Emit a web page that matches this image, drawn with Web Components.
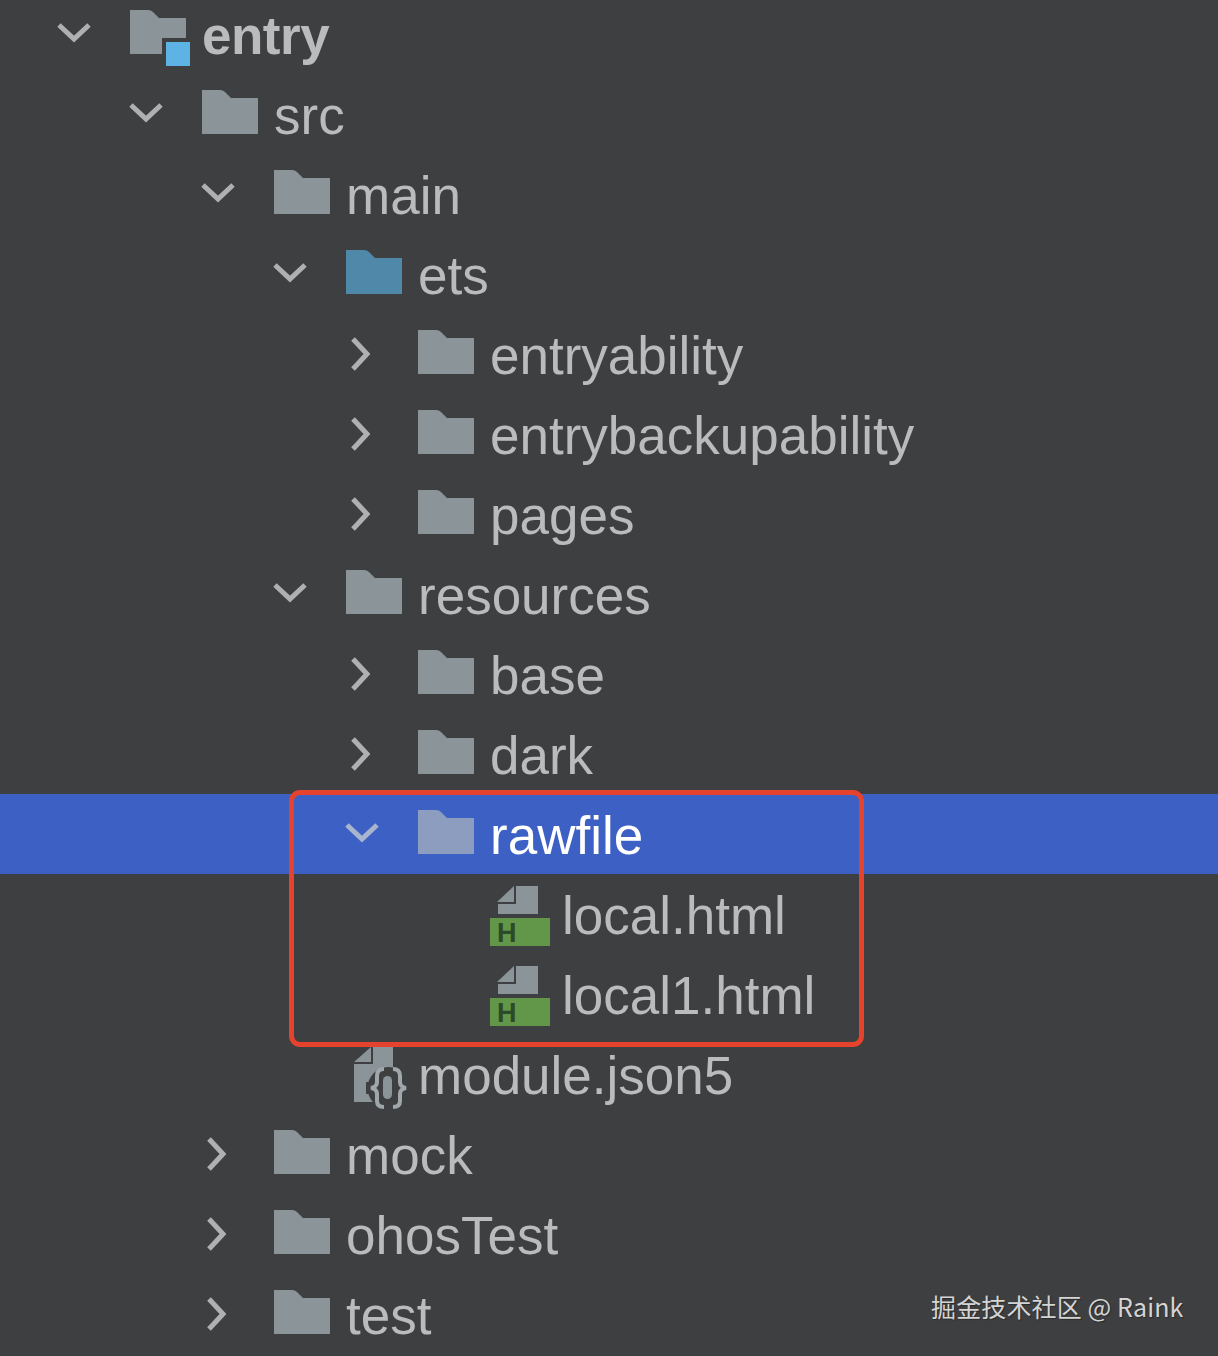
<!DOCTYPE html>
<html>
<head>
<meta charset="utf-8">
<title>Project tree</title>
<style>
    html, body { margin: 0; padding: 0; background: #3e3f41; }
    body { overflow: hidden; height: 1356px; }
</style>
</head>
<body>
<project-tree>
    <tree-row level="0" arrow="down" icon="module" bold>entry</tree-row>
    <tree-row level="1" arrow="down" icon="folder">src</tree-row>
    <tree-row level="2" arrow="down" icon="folder">main</tree-row>
    <tree-row level="3" arrow="down" icon="source">ets</tree-row>
    <tree-row level="4" arrow="right" icon="folder">entryability</tree-row>
    <tree-row level="4" arrow="right" icon="folder">entrybackupability</tree-row>
    <tree-row level="4" arrow="right" icon="folder">pages</tree-row>
    <tree-row level="3" arrow="down" icon="folder">resources</tree-row>
    <tree-row level="4" arrow="right" icon="folder">base</tree-row>
    <tree-row level="4" arrow="right" icon="folder">dark</tree-row>
    <tree-row level="4" arrow="down" icon="folder" selected>rawfile</tree-row>
    <tree-row level="5" icon="html">local.html</tree-row>
    <tree-row level="5" icon="html">local1.html</tree-row>
    <tree-row level="3" icon="json">module.json5</tree-row>
    <tree-row level="2" arrow="right" icon="folder">mock</tree-row>
    <tree-row level="2" arrow="right" icon="folder">ohosTest</tree-row>
    <tree-row level="2" arrow="right" icon="folder">test</tree-row>
    <highlight-box></highlight-box>
    <water-mark>掘金技术社区 @ Raink</water-mark>
</project-tree>

<script>
const folderPath = 'M0 0H18Q21 0 23 2L29 8H56V44H0Z';

const arrows = {
    down: '<path d="M2 8L17 22L32 8" fill="none" stroke="currentColor" stroke-width="5"/>',
    right: '<path d="M8 2L22 17L8 32" fill="none" stroke="currentColor" stroke-width="5"/>'
};

const icons = {
    folder: `<svg width="56" height="44" viewBox="0 0 56 44"><path class="fold" d="${folderPath}"/></svg>`,
    source: `<svg width="56" height="44" viewBox="0 0 56 44"><path d="${folderPath}" fill="#4f88a8"/></svg>`,
    module: `<svg width="60" height="56" viewBox="0 0 60 56" style="overflow:visible">
        <path class="fold" d="M0 0H18Q21 0 23 2L29 8H56V28H32V44H0Z"/>
        <rect x="36" y="32" width="24" height="24" fill="#5db3e4"/></svg>`,
    html: `<svg class="up" width="60" height="60" viewBox="0 0 60 60" style="overflow:visible">
        <path d="M7 16L24 0V16Z" fill="#8b9499"/>
        <path d="M26 0H48V28H8V18H26Z" fill="#8b9499"/>
        <rect x="0" y="32" width="60" height="28" fill="#629749"/>
        <text x="7" y="56" font-family="'Liberation Sans'" font-weight="700" font-size="27" fill="#2c4a2a">H</text></svg>`,
    json: `<svg class="up" width="62" height="64" viewBox="0 0 62 64" style="overflow:visible">
        <path d="M8 16L25 1V16Z" fill="#8b9499"/>
        <path d="M27 0H47V56H8V18H27Z" fill="#8b9499"/>
        <circle cx="42.5" cy="42" r="21" fill="#3e3f41"/>
        <rect x="20" y="36" width="8" height="12" fill="#3e3f41"/>
        <path d="M38 23Q31 23 31 30V36Q31 41 25 42Q31 43 31 48V55Q31 61 38 61M47 23Q54 23 54 30V36Q54 41 60 42Q54 43 54 48V55Q54 61 47 61" fill="none" stroke="#a0a7ab" stroke-width="4"/>
        <rect x="37" y="30" width="9" height="23" rx="4.5" fill="#8b9499"/></svg>`
};

const rowTemplate = document.createElement('template');
rowTemplate.innerHTML = `
<style>
    :host {
        display: flex;
        align-items: center;
        height: 80px;
        color: #b9bbbd;
        font-family: "Liberation Sans", Arial, sans-serif;
        font-size: 53px;
        white-space: nowrap;
    }
    :host([selected]) { background: #3d60c4; color: #fff; }
    :host([bold]) { font-weight: 700; letter-spacing: -.5px; }
    .arrow {
        width: 73px;
        height: 34px;
        flex: none;
        color: #aeb0b2;
    }
    .arrow svg { display: block; }
    .icon {
        display: flex;
        align-self: flex-start;
        width: 56px;
        flex: none;
        margin-top: 16px;
        margin-right: 16px;
    }
    .icon svg { display: block; flex: none; }
    .icon svg.up { margin-top: -4px; }
    .fold { fill: #8b9499; }
    :host([selected]) .fold { fill: #8c9dc0; }
    :host([selected]) .arrow { color: #a9b4cf; }
    .label { position: relative; top: 1px; }
</style>
<div class="arrow"></div>
<div class="icon"></div>
<span class="label"><slot></slot></span>
`;

class TreeRow extends HTMLElement {
    constructor() {
        super();
        this._shadowRoot = this.attachShadow({ mode: 'open' });
        this._shadowRoot.appendChild(rowTemplate.content.cloneNode(true));
    }

    connectedCallback() {
        let level = Number(this.getAttribute('level'));
        let arrow = this.getAttribute('arrow');
        let icon = this.getAttribute('icon');

        this.style.paddingLeft = (57 + 72 * level) + 'px';
        if (arrow) {
            this._shadowRoot.querySelector('.arrow').innerHTML =
                '<svg width="34" height="34" viewBox="0 0 34 34">' + arrows[arrow] + '</svg>';
        }
        this._shadowRoot.querySelector('.icon').innerHTML = icons[icon];
    }
}

class ProjectTree extends HTMLElement {
    constructor() {
        super();
        this.attachShadow({ mode: 'open' }).innerHTML = `
        <style>
            :host {
                display: block;
                position: relative;
                margin-top: -6px;
                background: #3e3f41;
            }
        </style>
        <slot></slot>`;
    }
}

class HighlightBox extends HTMLElement {
    constructor() {
        super();
        this.attachShadow({ mode: 'open' }).innerHTML = `
        <style>
            :host {
                position: absolute;
                left: 289px;
                top: 796px;
                width: 565px;
                height: 247px;
                border: 5px solid #e5432d;
                border-radius: 11px;
            }
        </style>`;
    }
}

class WaterMark extends HTMLElement {
    constructor() {
        super();
        this.attachShadow({ mode: 'open' }).innerHTML = `
        <style>
            :host {
                position: absolute;
                left: 931px;
                top: 1295px;
                color: #d4d4d4;
                font-family: "Noto Sans CJK SC", "Liberation Sans", sans-serif;
                font-size: 25px;
                letter-spacing: .13px;
                line-height: 34px;
                white-space: nowrap;
                text-shadow: 1px 1px 1px #2a2a2a;
            }
        </style>
        <slot></slot>`;
    }
}

customElements.define('tree-row', TreeRow);
customElements.define('project-tree', ProjectTree);
customElements.define('highlight-box', HighlightBox);
customElements.define('water-mark', WaterMark);
</script>
</body>
</html>
